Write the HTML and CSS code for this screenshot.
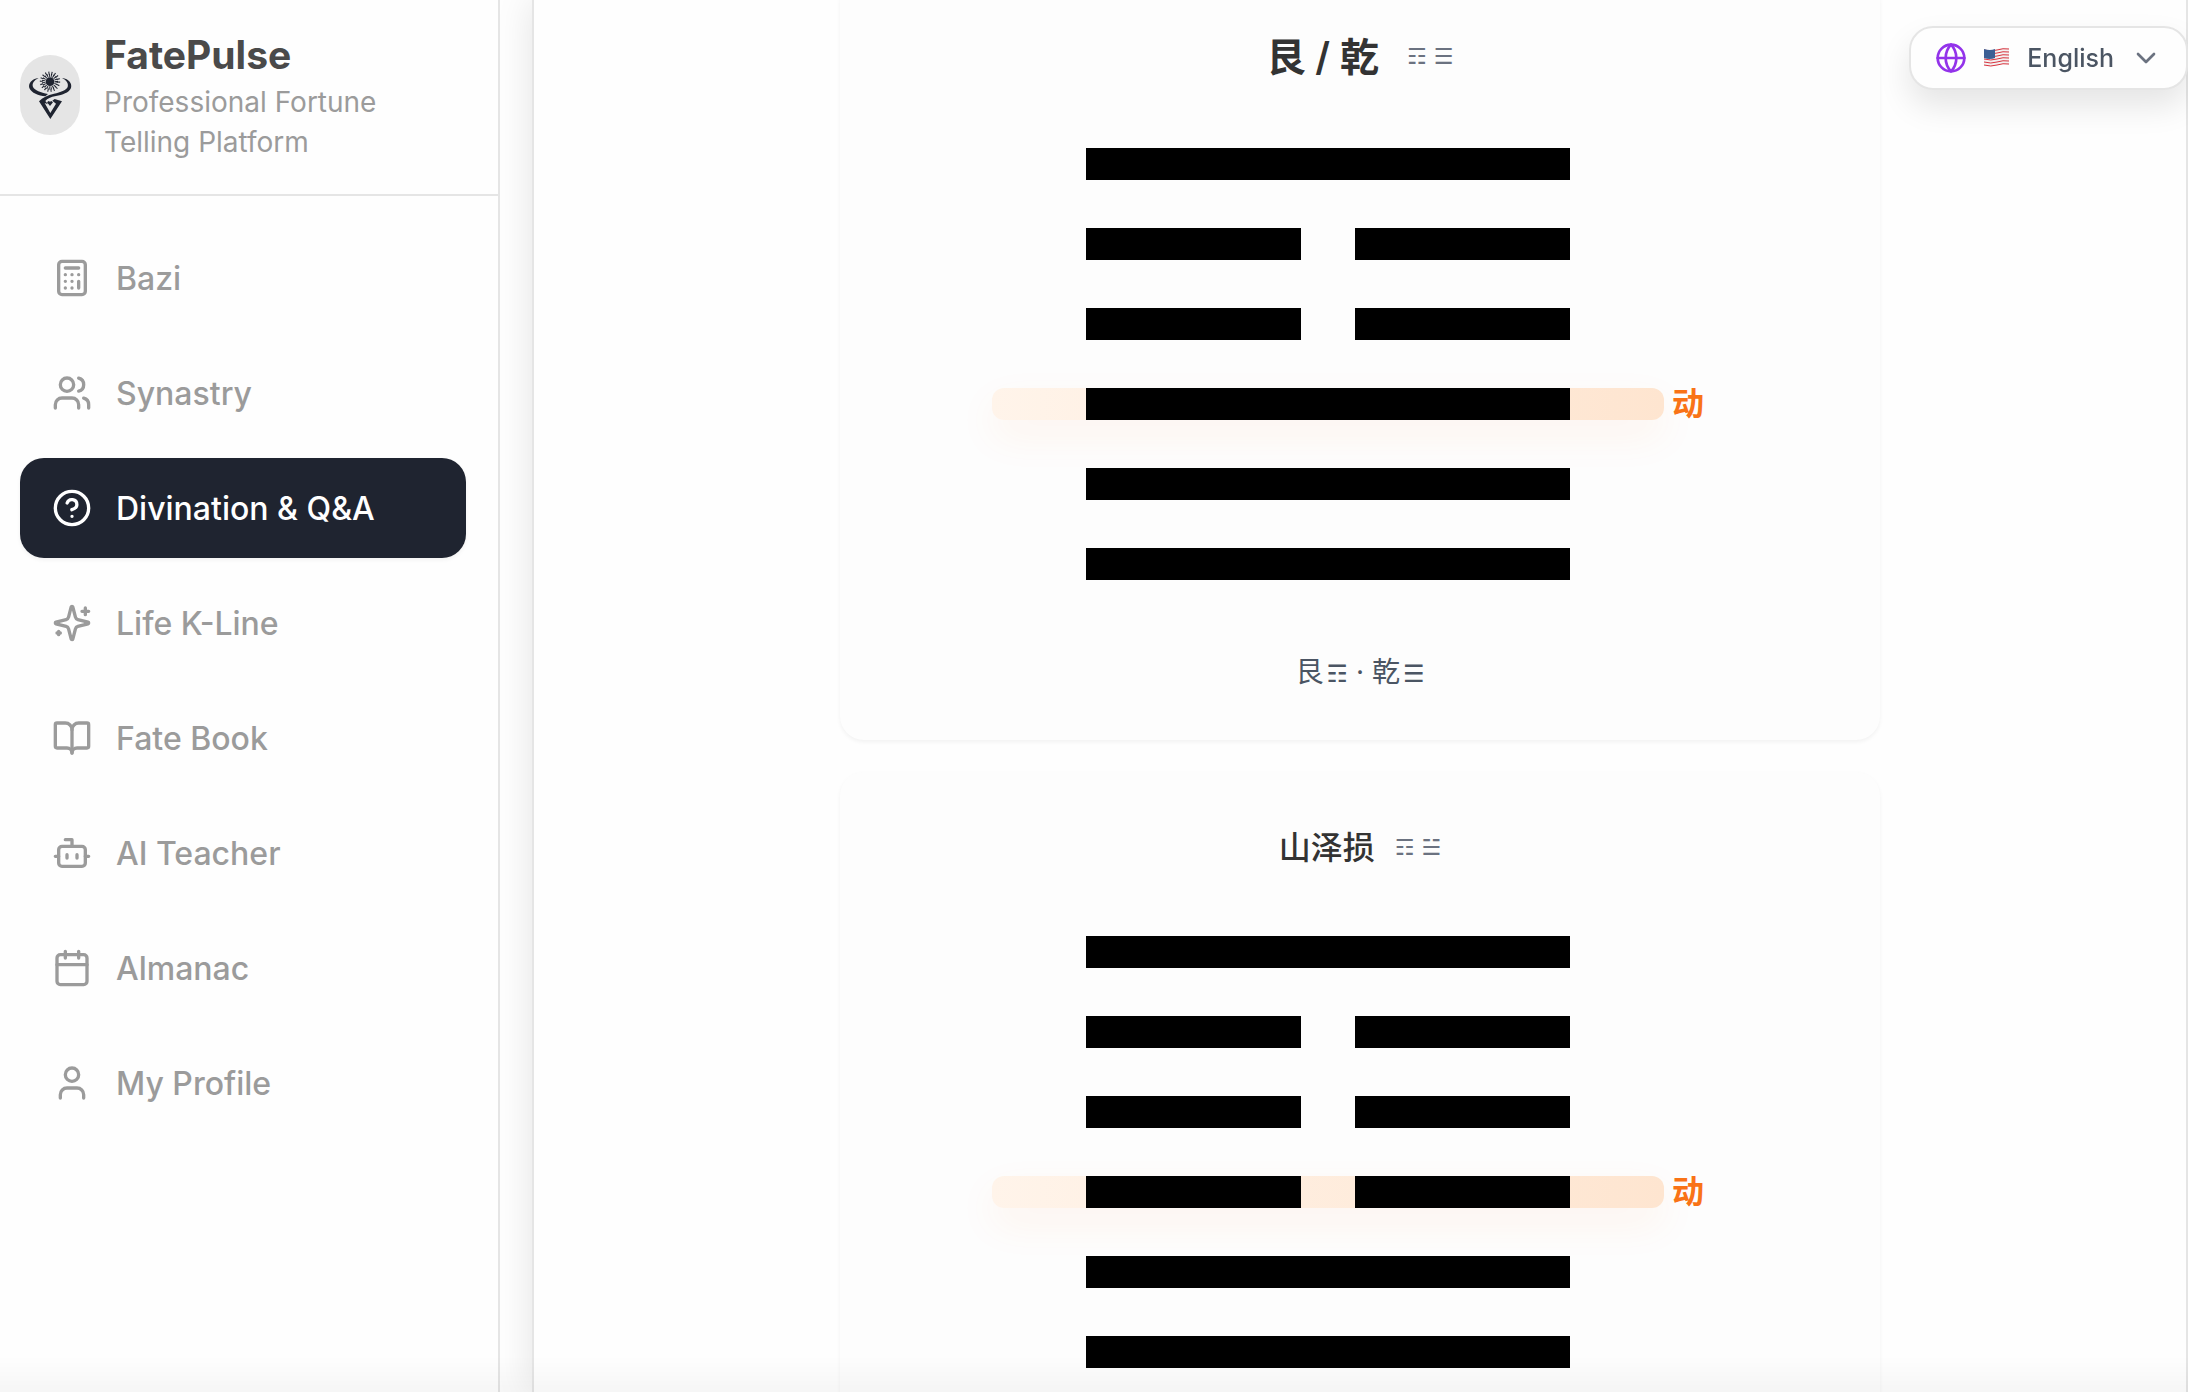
FILE: index.html
```html
<!DOCTYPE html>
<html lang="en">
<head>
<meta charset="utf-8">
<meta name="viewport" content="width=device-width, initial-scale=1">
<title>FatePulse</title>
<link rel="stylesheet" href="styles.css">
</head>
<body>
<div class="app">
  <aside class="sidebar">
    <header class="brand">
      <span class="brand-logo">
        <svg viewBox="0 0 180 240" aria-hidden="true">
          <circle class="ink" cx="90" cy="80" r="13"/>
          <circle class="rays" cx="90" cy="80" r="19"/>
          <circle class="rays rays-outer" cx="90" cy="80" r="26"/>
          <path class="ink" d="M56 69C34 72 24 86 28 99C34 114 56 122 76 124L84 117C62 113 44 106 39 96C35 85 42 76 56 69Z"/>
          <path class="ink" d="M126 69C148 72 157 86 153 99C146 114 128 119 108 123C92 126 82 131 76 138L84 148L74 144L91 174L108 146L97 137L104 132L126 139L91 192L57 139C68 128 82 120 102 116C122 112 138 106 143 96C146 85 140 76 126 69Z"/>
          <path class="ink" d="M90 153L81 142L86 138L90 140L94 138L99 142Z"/>
        </svg>
      </span>
      <div class="brand-text">
        <h1 class="brand-name">FatePulse</h1>
        <p class="brand-tagline">Professional Fortune Telling Platform</p>
      </div>
    </header>
    <nav class="nav" aria-label="Main">
      <a class="nav-item" href="#bazi">
        <svg class="icon" viewBox="0 0 24 24" aria-hidden="true"><rect width="16" height="20" x="4" y="2" rx="2"/><path d="M8 6h8M16 14v4M16 10h.01M12 10h.01M8 10h.01M12 14h.01M8 14h.01M12 18h.01M8 18h.01"/></svg>
        <span>Bazi</span>
      </a>
      <a class="nav-item" href="#synastry">
        <svg class="icon" viewBox="0 0 24 24" aria-hidden="true"><path d="M16 21v-2a4 4 0 0 0-4-4H6a4 4 0 0 0-4 4v2"/><circle cx="9" cy="7" r="4"/><path d="M22 21v-2a4 4 0 0 0-3-3.87M16 3.13a4 4 0 0 1 0 7.75"/></svg>
        <span>Synastry</span>
      </a>
      <a class="nav-item nav-item-active" href="#divination" aria-current="page">
        <svg class="icon" viewBox="0 0 24 24" aria-hidden="true"><circle cx="12" cy="12" r="10"/><path d="M9.09 9a3 3 0 0 1 5.83 1c0 2-3 3-3 3M12 17h.01"/></svg>
        <span>Divination &amp; Q&amp;A</span>
      </a>
      <a class="nav-item" href="#kline">
        <svg class="icon" viewBox="0 0 24 24" aria-hidden="true"><path d="M9.937 15.5A2 2 0 0 0 8.5 14.063l-6.135-1.582a.5.5 0 0 1 0-.962L8.5 9.936A2 2 0 0 0 9.937 8.5l1.582-6.135a.5.5 0 0 1 .963 0L14.063 8.5A2 2 0 0 0 15.5 9.937l6.135 1.581a.5.5 0 0 1 0 .964L15.5 14.063a2 2 0 0 0-1.437 1.437l-1.582 6.135a.5.5 0 0 1-.963 0z"/><path d="M20 3v4M22 5h-4M4 17v2M5 18H3"/></svg>
        <span>Life K-Line</span>
      </a>
      <a class="nav-item" href="#book">
        <svg class="icon" viewBox="0 0 24 24" aria-hidden="true"><path d="M12 7v14"/><path d="M3 18a1 1 0 0 1-1-1V4a1 1 0 0 1 1-1h5a4 4 0 0 1 4 4 4 4 0 0 1 4-4h5a1 1 0 0 1 1 1v13a1 1 0 0 1-1 1h-6a3 3 0 0 0-3 3 3 3 0 0 0-3-3z"/></svg>
        <span>Fate Book</span>
      </a>
      <a class="nav-item" href="#teacher">
        <svg class="icon" viewBox="0 0 24 24" aria-hidden="true"><path d="M12 8V4H8"/><rect width="16" height="12" x="4" y="8" rx="2"/><path d="M2 14h2M20 14h2M15 13v2M9 13v2"/></svg>
        <span>AI Teacher</span>
      </a>
      <a class="nav-item" href="#almanac">
        <svg class="icon" viewBox="0 0 24 24" aria-hidden="true"><path d="M8 2v4M16 2v4"/><rect width="18" height="18" x="3" y="4" rx="2"/><path d="M3 10h18"/></svg>
        <span>Almanac</span>
      </a>
      <a class="nav-item" href="#profile">
        <svg class="icon" viewBox="0 0 24 24" aria-hidden="true"><path d="M19 21v-2a4 4 0 0 0-4-4H9a4 4 0 0 0-4 4v2"/><circle cx="12" cy="7" r="4"/></svg>
        <span>My Profile</span>
      </a>
    </nav>
  </aside>

  <main class="panel">
    <section class="card">
      <h2 class="card-title card-title-large"><span>艮 / 乾</span><span class="trigrams">☶ ☰</span></h2>
      <div class="hexagram">
        <div class="line"></div>
        <div class="line line-broken"></div>
        <div class="line line-broken"></div>
        <div class="line line-moving"><span class="moving-label">动</span></div>
        <div class="line"></div>
        <div class="line"></div>
      </div>
      <p class="card-caption">艮<span class="trigram">☶</span> · 乾<span class="trigram">☰</span></p>
    </section>

    <section class="card">
      <h2 class="card-title"><span>山泽损</span><span class="trigrams">☶ ☱</span></h2>
      <div class="hexagram">
        <div class="line"></div>
        <div class="line line-broken"></div>
        <div class="line line-broken"></div>
        <div class="line line-broken line-moving"><span class="moving-label">动</span></div>
        <div class="line"></div>
        <div class="line"></div>
      </div>
    </section>
  </main>

  <button class="language" type="button" aria-haspopup="listbox">
    <svg class="icon icon-globe" viewBox="0 0 24 24" aria-hidden="true"><circle cx="12" cy="12" r="10"/><path d="M12 2a14.5 14.5 0 0 0 0 20 14.5 14.5 0 0 0 0-20M2 12h20"/></svg>
    <svg class="flag" viewBox="0 0 28 24" aria-hidden="true">
      <path fill="#f4f1f1" d="M1 3Q8 5 14 3T26 2V19Q20 17 14 19T1 20Z"/>
      <path class="stripes" d="M1 4Q8 6 14 4T26 3M1 7Q8 9 14 7T26 6M1 10Q8 12 14 10T26 9M1 13Q8 15 14 13T26 12M1 16Q8 18 14 16T26 15M1 19Q8 21 14 19T26 18"/>
      <path fill="#3c5f94" d="M1 3Q7 5 12 3V12Q7 14 1 12Z"/>
    </svg>
    <span>English</span>
    <svg class="icon icon-chevron" viewBox="0 0 24 24" aria-hidden="true"><path d="m6 9 6 6 6-6"/></svg>
  </button>
  <div class="bottom-fade"></div>
</div>
</body>
</html>
```
FILE: styles.css
```css
* {
  box-sizing: border-box;
}

body {
  margin: 0;
  background: #fefefe;
  color: #333;
  font-family: Inter, "Noto Sans CJK SC", sans-serif;
}

h1,
h2,
p {
  margin: 0;
}

.app {
  display: flex;
  height: 100vh;
  overflow: hidden;
}

.icon {
  flex: none;
  width: 40px;
  height: 40px;
  fill: none;
  stroke: currentColor;
  stroke-width: 2;
  stroke-linecap: round;
  stroke-linejoin: round;
}

/* Sidebar */

.sidebar {
  position: relative;
  z-index: 1;
  flex: none;
  width: 500px;
  border-right: 2px solid #e5e5e5;
  background: #fefefe;
}

.brand {
  display: flex;
  align-items: center;
  gap: 24px;
  padding: 28px 96px 32px 20px;
  border-bottom: 2px solid #e5e5e5;
}

.brand-logo {
  flex: none;
  width: 60px;
  height: 80px;
  border-radius: 30px;
  background: #e5e5e5;
}

.brand-logo svg {
  display: block;
}

.ink {
  fill: #1f2430;
}

.rays {
  fill: none;
  stroke: #1f2430;
  stroke-width: 10;
  stroke-dasharray: 3 3;
}

.rays-outer {
  stroke-width: 9;
  stroke-dasharray: 3 6;
}

.brand-name {
  color: #4a4a4a;
  font-size: 39px;
  font-weight: 700;
  line-height: 54px;
}

.brand-tagline {
  color: #9b9b9b;
  font-size: 28px;
  line-height: 40px;
}

.nav {
  display: flex;
  flex-direction: column;
  gap: 15px;
  padding: 32px 32px 32px 20px;
}

.nav-item {
  display: flex;
  align-items: center;
  gap: 24px;
  height: 100px;
  padding: 0 32px;
  border-radius: 24px;
  color: #9b9b9b;
  font-size: 32px;
  font-weight: 500;
  text-decoration: none;
  white-space: nowrap;
}

.nav-item-active {
  background: #1f2430;
  color: #fff;
  box-shadow: 0 2px 4px rgba(0, 0, 0, 0.05);
}

/* Reading panel */

.panel {
  display: flex;
  flex: 1;
  flex-direction: column;
  align-items: center;
  gap: 32px;
  min-width: 0;
  margin-left: 32px;
  overflow-y: auto;
  scrollbar-width: none;
  border: solid #e5e5e5;
  border-width: 0 2px;
  background: #fefefe;
  box-shadow: 0 0 36px rgba(0, 0, 0, 0.11);
}

.card {
  flex: none;
  width: 63%;
  padding: 48px;
  border-radius: 24px;
  background: #fdfdfd;
  box-shadow: 0 2px 4px rgba(0, 0, 0, 0.05);
}

/* The list opens part-way down the first card */
.card:first-child {
  margin-top: -22px;
}

.card-title {
  display: flex;
  align-items: center;
  justify-content: center;
  gap: 20px;
  font-size: 32px;
  font-weight: 500;
  line-height: 56px;
}

.card-title-large {
  gap: 28px;
  font-size: 39px;
  font-weight: 600;
  line-height: 62px;
}

.trigrams,
.trigram {
  font-family: "DejaVu Sans", sans-serif;
  font-weight: 400;
}

.trigrams {
  color: #6b7280;
  font-size: 22px;
}

.trigram {
  margin-left: 3px;
  font-size: 24px;
  line-height: 24px;
}

.hexagram {
  display: flex;
  flex-direction: column;
  align-items: center;
  gap: 48px;
  padding: 60px 64px 72px 0;
}

.line {
  position: relative;
  z-index: 0;
  width: 484px;
  height: 32px;
  background: #000;
}

.line-broken {
  background: linear-gradient(90deg, #000 215px, transparent 215px 269px, #000 269px);
}

/* A moving line keeps its bar above the highlight */
.line-moving {
  background: none;
}

.line-moving::before,
.line-moving::after {
  content: "";
  position: absolute;
  z-index: -1;
}

.line-moving::before {
  inset: 0 -94px;
  border-radius: 12px;
  background: linear-gradient(90deg, #fff4ea, #fee5d0);
  box-shadow: 0 16px 40px rgba(249, 115, 22, 0.07);
}

.line-moving::after {
  inset: 0;
  background: #000;
}

.line-moving.line-broken::after {
  background: linear-gradient(90deg, #000 215px, transparent 215px 269px, #000 269px);
}

.moving-label {
  position: absolute;
  top: 0;
  left: 100%;
  margin-left: 102px;
  color: #f97316;
  font-size: 32px;
  font-weight: 600;
  line-height: 32px;
}

.card-caption {
  color: #4b5563;
  font-size: 28px;
  line-height: 40px;
  text-align: center;
}

/* Language switcher, floating over the panel */

.language {
  position: fixed;
  z-index: 2;
  top: 26px;
  right: 0;
  display: flex;
  align-items: center;
  gap: 16px;
  height: 64px;
  padding: 0 24px;
  border: 2px solid #e5e5e5;
  border-radius: 24px;
  background: #fefefe;
  box-shadow: 0 16px 32px rgba(0, 0, 0, 0.1);
  color: #4b5563;
  font-family: inherit;
  font-size: 25px;
  font-weight: 500;
}

.language .icon {
  width: 32px;
  height: 32px;
}

.icon-globe {
  color: #9333ea;
}

.icon-chevron {
  color: #6b7280;
}

.flag {
  flex: none;
  width: 28px;
  height: 24px;
}

.stripes {
  fill: none;
  stroke: #d8343f;
  stroke-width: 1;
}

.bottom-fade {
  position: fixed;
  z-index: 3;
  inset: auto 0 0;
  height: 36px;
  background: linear-gradient(transparent, rgba(0, 0, 0, 0.03));
  pointer-events: none;
}
```
